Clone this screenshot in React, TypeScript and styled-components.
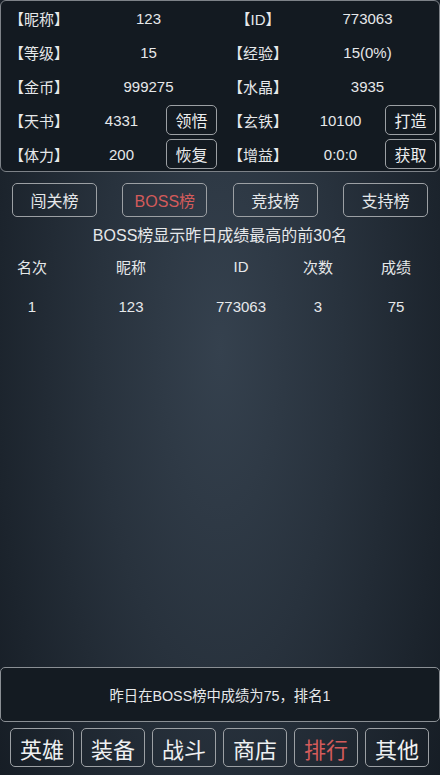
import React from 'react'
import styled, { createGlobalStyle } from 'styled-components'

const GlobalStyle = createGlobalStyle`
  html, body {
    margin: 0;
    padding: 0;
    background: #141b22;
  }
  * {
    box-sizing: border-box;
  }
`

const Page = styled.div`
  width: 440px;
  height: 775px;
  display: flex;
  flex-direction: column;
  font-family: "Liberation Sans", "Noto Sans CJK SC", sans-serif;
  color: #e6e8ea;
  background: radial-gradient(ellipse 62% 95% at 50% 45%, #35414e 0%, #28323d 45%, #161d25 100%);
  overflow: hidden;
`

const InfoPanel = styled.div`
  border: 1px solid #7d8288;
  border-radius: 6px;
  background: #131a21;
  display: grid;
  grid-template-columns: 1fr 1fr;
`

const InfoCell = styled.div`
  height: 34px;
  display: flex;
  align-items: center;
  font-size: 15px;
`

const Label = styled.span`
  width: 76px;
  text-align: center;
`

const Value = styled.span`
  flex: 1;
  text-align: center;
`

const SmallButton = styled.div`
  width: 51px;
  height: 30px;
  margin-right: 3px;
  border: 1px solid #9ca0a4;
  border-radius: 5px;
  display: flex;
  align-items: center;
  justify-content: center;
  font-size: 16px;
  color: #eceeef;
`

const TabRow = styled.div`
  display: flex;
  justify-content: space-between;
  padding: 0 12px;
  margin-top: 11px;
`

const Tab = styled.div<{ $active?: boolean }>`
  width: 85px;
  height: 34px;
  border: 1px solid #9ca0a4;
  border-radius: 5px;
  display: flex;
  align-items: center;
  justify-content: center;
  font-size: 16px;
  color: ${p => (p.$active ? '#d35b5b' : '#e6e8ea')};
`

const Notice = styled.div`
  margin-top: 9px;
  line-height: 20px;
  text-align: center;
  font-size: 16px;
`

const TableRow = styled.div`
  display: grid;
  grid-template-columns: 64px 134px 86px 68px 88px;
  height: 40px;
  align-items: center;
  font-size: 15px;
  text-align: center;
`

const Spacer = styled.div`
  flex: 1;
`

const MessageBox = styled.div`
  height: 55px;
  border: 1px solid #8a8f94;
  border-radius: 5px;
  background: #141b22;
  display: flex;
  align-items: center;
  justify-content: center;
  font-size: 14.3px;
`

const NavBar = styled.div`
  display: flex;
  gap: 7px;
  padding: 0 11px 8px 10px;
  margin-top: 6px;
`

const NavButton = styled.div<{ $active?: boolean }>`
  flex: 1;
  height: 39px;
  border: 1px solid #9ca0a4;
  border-radius: 5px;
  display: flex;
  align-items: center;
  justify-content: center;
  font-size: 22px;
  color: ${p => (p.$active ? '#d35b5b' : '#eef0f1')};
`

type Info = { label: string; value: string; action?: string }

const infos: Info[] = [
  { label: '【昵称】', value: '123' },
  { label: '【ID】', value: '773063' },
  { label: '【等级】', value: '15' },
  { label: '【经验】', value: '15(0%)' },
  { label: '【金币】', value: '999275' },
  { label: '【水晶】', value: '3935' },
  { label: '【天书】', value: '4331', action: '领悟' },
  { label: '【玄铁】', value: '10100', action: '打造' },
  { label: '【体力】', value: '200', action: '恢复' },
  { label: '【增益】', value: '0:0:0', action: '获取' },
]

const tabs = ['闯关榜', 'BOSS榜', '竞技榜', '支持榜']
const navs = ['英雄', '装备', '战斗', '商店', '排行', '其他']

const App = () => {
  return (
    <Page>
      <GlobalStyle />
      <InfoPanel>
        {infos.map(i => (
          <InfoCell key={i.label}>
            <Label>{i.label}</Label>
            <Value>{i.value}</Value>
            {i.action && <SmallButton>{i.action}</SmallButton>}
          </InfoCell>
        ))}
      </InfoPanel>
      <TabRow>
        {tabs.map(t => (
          <Tab key={t} $active={t === 'BOSS榜'}>{t}</Tab>
        ))}
      </TabRow>
      <Notice>BOSS榜显示昨日成绩最高的前30名</Notice>
      <TableRow>
        <span>名次</span>
        <span>昵称</span>
        <span>ID</span>
        <span>次数</span>
        <span>成绩</span>
      </TableRow>
      <TableRow>
        <span>1</span>
        <span>123</span>
        <span>773063</span>
        <span>3</span>
        <span>75</span>
      </TableRow>
      <Spacer />
      <MessageBox>昨日在BOSS榜中成绩为75，排名1</MessageBox>
      <NavBar>
        {navs.map(n => (
          <NavButton key={n} $active={n === '排行'}>{n}</NavButton>
        ))}
      </NavBar>
    </Page>
  )
}

export default App
